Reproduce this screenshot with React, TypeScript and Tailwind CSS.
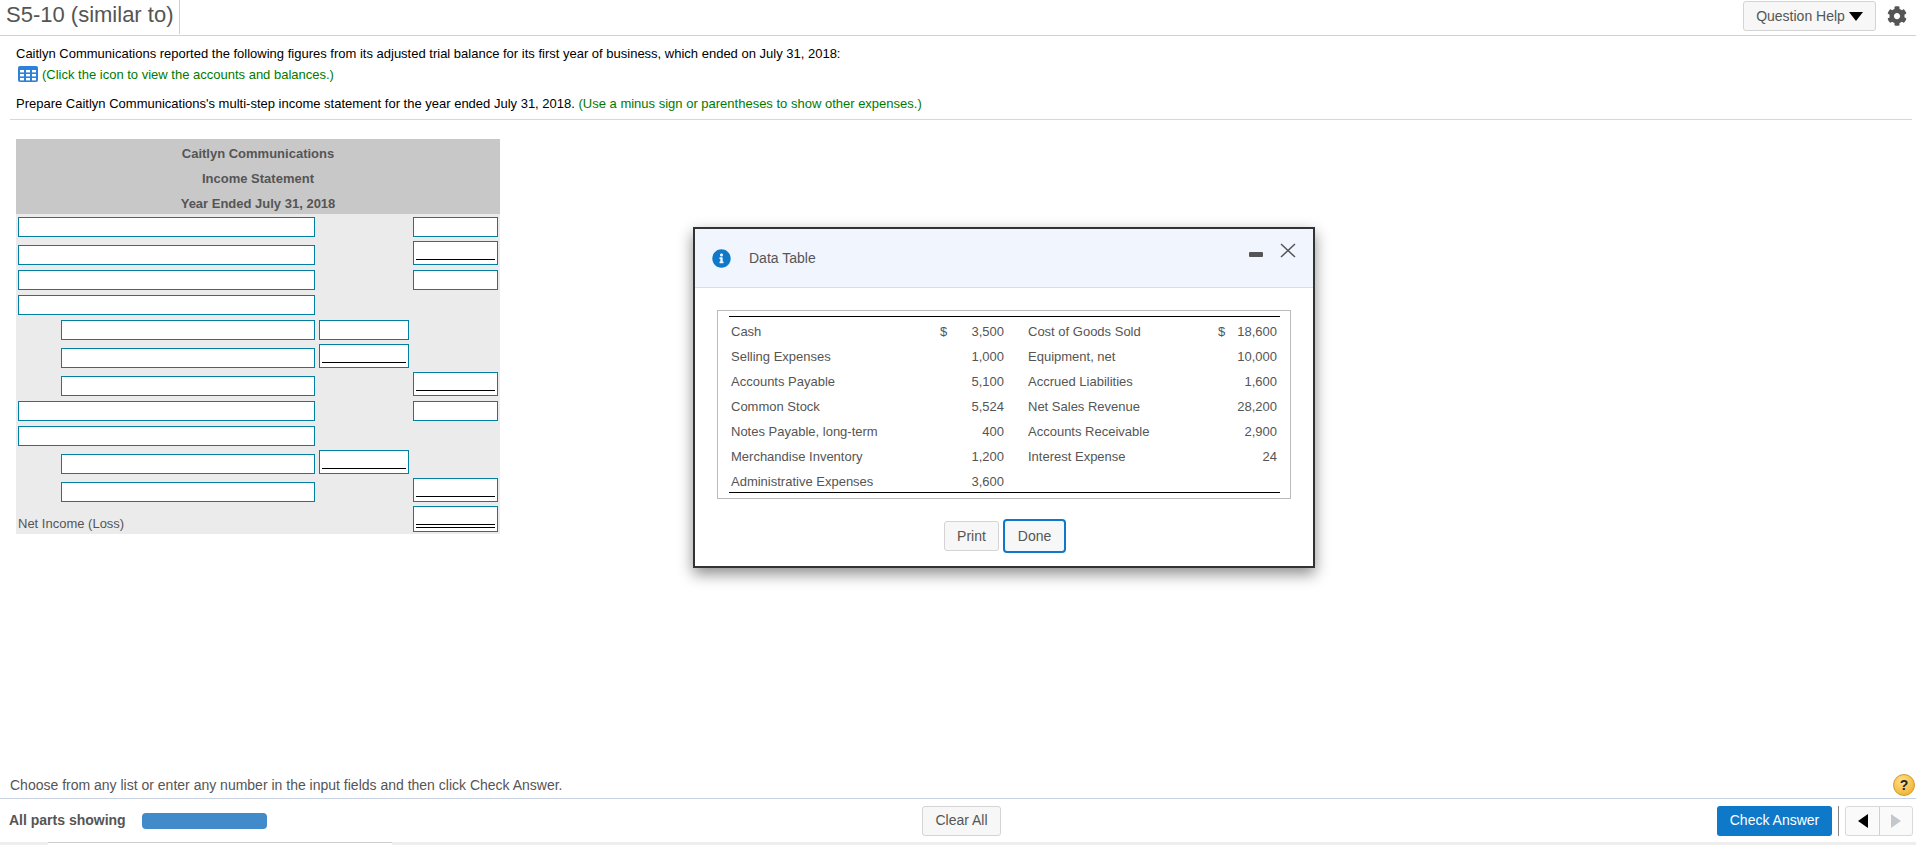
// App.tsx
import { FaCog, FaInfoCircle } from 'react-icons/fa';

type Line = 'none' | 'plain' | 'under' | 'double';

type Fila = {
  h: string;
  label: 'none' | 'full' | 'indent';
  mid: Line;
  right: Line;
};

const filas: Fila[] = [
  { h: 'h-[25px]', label: 'full', mid: 'none', right: 'plain' },
  { h: 'h-[28px]', label: 'full', mid: 'none', right: 'under' },
  { h: 'h-[25px]', label: 'full', mid: 'none', right: 'plain' },
  { h: 'h-[25px]', label: 'full', mid: 'none', right: 'none' },
  { h: 'h-[25px]', label: 'indent', mid: 'plain', right: 'none' },
  { h: 'h-[28px]', label: 'indent', mid: 'under', right: 'none' },
  { h: 'h-[28px]', label: 'indent', mid: 'none', right: 'under' },
  { h: 'h-[25px]', label: 'full', mid: 'none', right: 'plain' },
  { h: 'h-[25px]', label: 'full', mid: 'none', right: 'none' },
  { h: 'h-[28px]', label: 'indent', mid: 'under', right: 'none' },
  { h: 'h-[28px]', label: 'indent', mid: 'none', right: 'under' },
];

const datos = [
  ['Cash', '$', '3,500', 'Cost of Goods Sold', '$', '18,600'],
  ['Selling Expenses', '', '1,000', 'Equipment, net', '', '10,000'],
  ['Accounts Payable', '', '5,100', 'Accrued Liabilities', '', '1,600'],
  ['Common Stock', '', '5,524', 'Net Sales Revenue', '', '28,200'],
  ['Notes Payable, long-term', '', '400', 'Accounts Receivable', '', '2,900'],
  ['Merchandise Inventory', '', '1,200', 'Interest Expense', '', '24'],
  ['Administrative Expenses', '', '3,600', '', '', ''],
];

function Celda({ tipo, ancho }: { tipo: Line; ancho: string }) {
  if (tipo === 'none') return <div className={ancho} />;
  return (
    <div className={`${ancho} bg-white border border-[#007fa3] flex flex-col justify-end px-[2px] ${tipo === 'plain' ? 'h-[20px]' : tipo === 'under' ? 'h-[24px] pb-[4px]' : 'h-[26px] pb-[3px]'}`}>
      {tipo === 'under' && <div className="h-px bg-black" />}
      {tipo === 'double' && <div className="h-[4px] border-y border-black" />}
    </div>
  );
}

function IconoTabla() {
  return (
    <svg width="20" height="16" viewBox="0 0 20 16" className="shrink-0">
      <rect x="0" y="0" width="20" height="16" rx="2" fill="#2f80d8" />
      <g fill="#ffffff">
        <rect x="2" y="4" width="4" height="2.4" />
        <rect x="8" y="4" width="4" height="2.4" />
        <rect x="14" y="4" width="4" height="2.4" />
        <rect x="2" y="8" width="4" height="2.4" />
        <rect x="8" y="8" width="4" height="2.4" />
        <rect x="14" y="8" width="4" height="2.4" />
        <rect x="2" y="12" width="4" height="2.4" />
        <rect x="8" y="12" width="4" height="2.4" />
        <rect x="14" y="12" width="4" height="2.4" />
      </g>
    </svg>
  );
}

function App() {
  return (
    <div className="relative h-[845px] w-full overflow-hidden bg-white flex flex-col font-['Liberation_Sans',Arial,sans-serif] text-[#555]">
      {/* Cabecera */}
      <header className="h-[36px] shrink-0 border-b border-[#d0d0d6] flex items-start justify-between">
        <div className="h-[34px] w-[180px] border-r border-[#d0d0d6] pl-[6px] text-[22px] leading-[30px] text-[#555]">
          S5-10 (similar to)
        </div>
        <div className="flex items-center pt-px pr-[9px]">
          <button className="h-[30px] w-[133px] flex items-center justify-center gap-[4px] border border-[#d4d4d4] rounded-[3px] bg-[#f7f7f7] text-[14px] text-[#555]">
            Question Help
            <svg width="14" height="9" viewBox="0 0 14 9"><path d="M0 0h14L7 9z" fill="#000" /></svg>
          </button>
          <FaCog className="ml-[11px] w-[20px] h-[20px] text-[#555]" />
        </div>
      </header>

      {/* Enunciado */}
      <main className="grow min-h-0 flex flex-col">
        <div className="ml-[10px] mr-[4px] h-[84px] shrink-0 border-b border-[#d8d8d8] pl-[6px] pt-[8px] text-[13px] text-black">
          <p className="h-[19px] leading-[19px]">
            Caitlyn Communications reported the following figures from its adjusted trial balance for its first year of business, which ended on July 31, 2018:
          </p>
          <p className="h-[22px] flex items-center gap-[4px] pl-[2px] text-[#007a00] leading-[19px]">
            <IconoTabla />
            (Click the icon to view the accounts and balances.)
          </p>
          <p className="mt-[9px] h-[19px] leading-[19px]">
            Prepare Caitlyn Communications's multi-step income statement for the year ended July 31, 2018.{' '}
            <span className="text-[#007a00]">(Use a minus sign or parentheses to show other expenses.)</span>
          </p>
        </div>

        {/* Estado de resultados */}
        <section className="mt-[19px] ml-[16px] w-[484px] bg-[#ebebeb] text-[13px]">
          <div className="bg-[#c8c8c8] h-[75px] pt-[2px] font-bold text-center text-[#555] leading-[25px]">
            <div>Caitlyn Communications</div>
            <div>Income Statement</div>
            <div>Year Ended July 31, 2018</div>
          </div>
          {filas.map((f, i) => (
            <div key={i} className={`${f.h} flex items-end pb-[2px] pl-[2px]`}>
              <div className="w-[297px] flex justify-end">
                <Celda tipo="plain" ancho={f.label === 'full' ? 'w-[297px]' : 'w-[254px]'} />
              </div>
              <div className="ml-[4px] w-[90px]">
                <Celda tipo={f.mid} ancho="w-[90px]" />
              </div>
              <div className="ml-[4px] w-[85px]">
                <Celda tipo={f.right} ancho="w-[85px]" />
              </div>
            </div>
          ))}
          <div className="h-[30px] flex items-end justify-between pb-[2px] pl-[2px] pr-[2px]">
            <span className="text-[#555] leading-[20px] mb-[-2px]">Net Income (Loss)</span>
            <Celda tipo="double" ancho="w-[85px]" />
          </div>
        </section>
      </main>

      {/* Pie */}
      <footer className="h-[80px] shrink-0 flex flex-col">
        <div className="h-[35px] shrink-0 mt-[-1px] pt-[8px] border-b border-[#c9d2e2] flex items-center justify-between pl-[10px] pr-[1px] text-[14px] text-[#555]">
          <span className="whitespace-nowrap">Choose from any list or enter any number in the input fields and then click Check Answer.</span>
          <span className="w-[22px] h-[22px] rounded-full bg-[radial-gradient(circle_at_40%_30%,#ffe08a,#eda921)] border border-[#d19a2a] flex items-center justify-center text-[14px] font-bold text-[#222]">?</span>
        </div>
        <div className="grow flex items-center justify-between pl-[9px] pr-[3px]">
          <div className="flex items-center w-[992px]">
            <span className="w-[133px] whitespace-nowrap text-[14px] font-bold text-[#555]">All parts showing</span>
            <div className="w-[125px] h-[16px] rounded-[4px] bg-[#428bca]" />
            <button className="ml-auto h-[30px] w-[79px] border border-[#d4d4d4] rounded-[3px] bg-[#f7f7f7] text-[14px] text-[#555]">
              Clear All
            </button>
          </div>
          <div className="flex items-center">
            <button className="h-[30px] w-[115px] rounded-[3px] bg-[#0e78c9] text-[14px] text-white">Check Answer</button>
            <div className="mx-[6px] h-[30px] w-px bg-[#888]" />
            <div className="h-[30px] w-[68px] flex border border-[#d9d9d9] rounded-[3px] bg-[#fafafa]">
              <div className="w-[34px] border-r border-[#d0d0d0] flex items-center justify-center">
                <svg width="10" height="14" viewBox="0 0 10 14"><path d="M10 0v14L0 7z" fill="#000" /></svg>
              </div>
              <div className="grow flex items-center justify-center">
                <svg width="10" height="14" viewBox="0 0 10 14"><path d="M0 0v14l10-7z" fill="#c4c8cc" /></svg>
              </div>
            </div>
          </div>
        </div>
        <div className="h-[3px] shrink-0 bg-[#eeeeee] pl-[48px]">
          <div className="w-[344px] h-[3px] bg-white border-t border-[#ccc]" />
        </div>
      </footer>

      {/* Ventana Data Table */}
      <div className="absolute left-[693px] top-[227px] w-[622px] h-[341px] bg-white border-2 border-[#333] shadow-[0_6px_14px_rgba(0,0,0,0.45)] flex flex-col text-[#555]">
        <div className="h-[59px] shrink-0 bg-[#f1f6fe] border-b border-[#c8e4f8] relative flex items-center pl-[17px] gap-[18px] text-[14px]">
          <FaInfoCircle className="w-[19px] h-[19px] text-[#0e78c9]" />
          <span>Data Table</span>
          <div className="absolute right-[50px] top-[23px] w-[14px] h-[5px] rounded-[1px] bg-[#555]" />
          <svg className="absolute right-[17px] top-[14px]" width="16" height="15" viewBox="0 0 16 15">
            <path d="M1 1l14 13M15 1L1 14" stroke="#555" strokeWidth="1.5" fill="none" />
          </svg>
        </div>
        <div className="mt-[22px] ml-[22px] w-[574px] h-[189px] border border-[#bbb] pl-[11px] pr-[10px] pt-[5px]">
          <div className="border-y border-black h-[177px] pt-[2px] text-[13px]">
            {datos.map((fila, i) => (
              <div key={i} className="h-[25px] leading-[25px] flex pl-[2px] pr-[3px]">
                <span className="w-[209px] whitespace-nowrap">{fila[0]}</span>
                <span className="w-[20px]">{fila[1]}</span>
                <span className="w-[44px] text-right">{fila[2]}</span>
                <span className="ml-[24px] w-[190px] whitespace-nowrap">{fila[3]}</span>
                <span className="w-[10px]">{fila[4]}</span>
                <span className="grow text-right">{fila[5]}</span>
              </div>
            ))}
          </div>
        </div>
        <div className="mt-[20px] flex items-center pl-[249px] gap-[4px] text-[14px]">
          <button className="h-[30px] w-[55px] border border-[#d4d4d4] rounded-[3px] bg-[#f7f7f7]">Print</button>
          <button className="h-[34px] w-[63px] border-2 border-[#0e78c9] rounded-[4px] bg-[#f7f7f7]">Done</button>
        </div>
      </div>
    </div>
  );
}

export default App;
